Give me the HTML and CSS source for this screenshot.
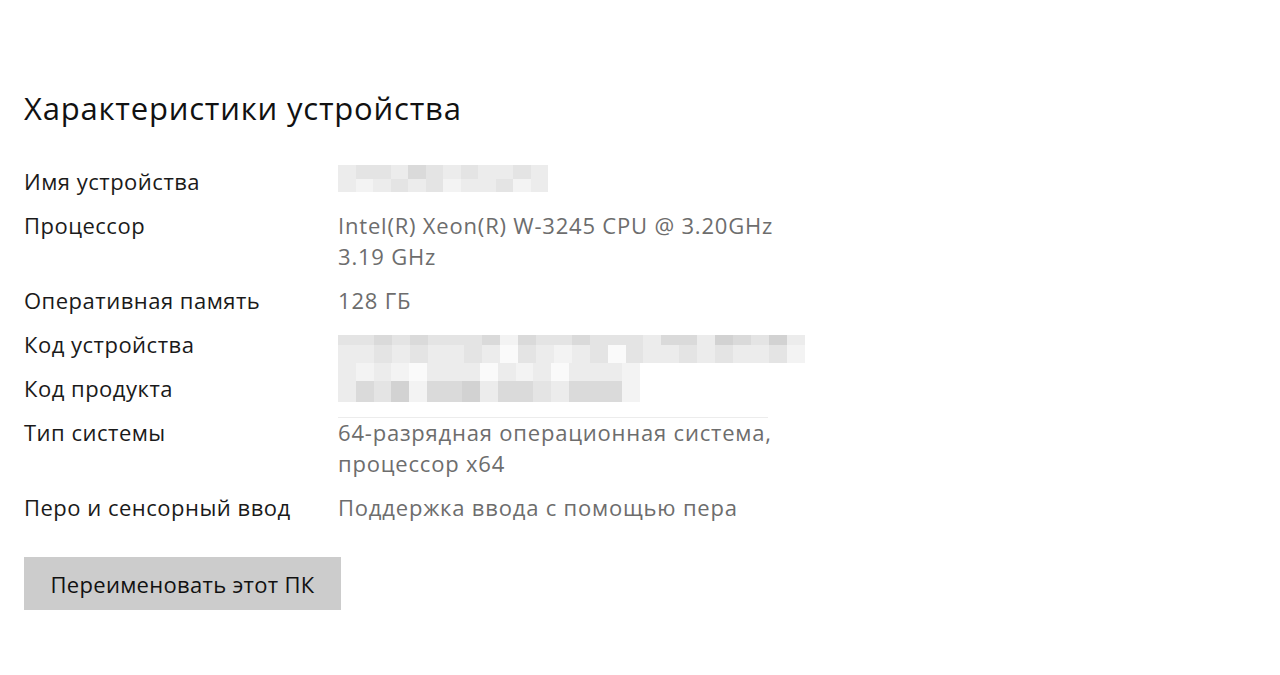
FILE: index.html
```html
<!DOCTYPE html>
<html lang="ru">
<head>
<meta charset="UTF-8" />
<meta name="viewport" content="width=device-width, initial-scale=1" />
<title>Характеристики устройства</title>
<link rel="stylesheet" href="styles.css">
</head>
<body>

<section class="specs">
  <h1 class="specs-title">Характеристики устройства</h1>

  <dl class="specs-list">
    <dt>Имя устройства</dt>
    <dd>
      <!-- скрыто (пикселизация) -->
      <div class="masked masked-name">
        <div class="px-row"><i class="a"></i><i class="b"></i><i class="b"></i><i class="a"></i><i class="c"></i><i class="b"></i><i class="a"></i><i class="b"></i><i class="a"></i><i class="a"></i><i class="b"></i><i class="a"></i></div>
        <div class="px-row"><i class="a"></i><i class="e"></i><i class="a"></i><i class="b"></i><i class="a"></i><i class="b"></i><i class="e"></i><i class="a"></i><i class="a"></i><i class="b"></i><i class="e"></i><i class="a"></i></div>
      </div>
    </dd>

    <dt>Процессор</dt>
    <dd>Intel(R) Xeon(R) W-3245 CPU @ 3.20GHz<br>3.19 GHz</dd>

    <dt>Оперативная память</dt>
    <dd>128 ГБ</dd>

    <dt>Код устройства</dt>
    <dd class="fixed">
      <!-- закрывает код устройства и код продукта -->
      <div class="masked masked-code">
        <div class="px-row thin"><i class="b"></i><i class="b"></i><i class="c"></i><i class="b"></i><i class="c"></i><i class="b"></i><i class="b"></i><i class="b"></i><i class="c"></i><i class="e"></i><i class="c"></i><i class="b"></i><i class="b"></i><i class="c"></i><i class="b"></i><i class="b"></i><i class="b"></i><i class="a"></i><i class="c"></i><i class="c"></i><i class="a"></i><i class="d"></i><i class="c"></i><i class="b"></i><i class="d"></i><i class="a"></i></div>
        <div class="px-row"><i class="a"></i><i class="a"></i><i class="b"></i><i class="a"></i><i class="b"></i><i class="a"></i><i class="a"></i><i class="b"></i><i class="a"></i><i class="f"></i><i class="b"></i><i class="a"></i><i class="e"></i><i class="a"></i><i class="b"></i><i class="f"></i><i class="b"></i><i class="a"></i><i class="a"></i><i class="b"></i><i class="a"></i><i class="b"></i><i class="a"></i><i class="a"></i><i class="b"></i><i class="e"></i></div>
        <div class="px-row short"><i class="a"></i><i class="e"></i><i class="a"></i><i class="e"></i><i class="f"></i><i class="a"></i><i class="a"></i><i class="a"></i><i class="f"></i><i class="a"></i><i class="e"></i><i class="a"></i><i class="f"></i><i class="a"></i><i class="a"></i><i class="a"></i><i class="e"></i></div>
        <div class="px-row short tall"><i class="a"></i><i class="c"></i><i class="b"></i><i class="d"></i><i class="e"></i><i class="c"></i><i class="c"></i><i class="d"></i><i class="a"></i><i class="c"></i><i class="c"></i><i class="b"></i><i class="a"></i><i class="c"></i><i class="c"></i><i class="c"></i><i class="e"></i></div>
      </div>
    </dd>

    <dt>Код продукта</dt>
    <dd></dd>

    <dt>Тип системы</dt>
    <dd class="faint-line">64-разрядная операционная система,<br>процессор x64</dd>

    <dt>Перо и сенсорный ввод</dt>
    <dd>Поддержка ввода с помощью пера</dd>
  </dl>

  <button class="btn-rename" type="button">Переименовать этот ПК</button>
</section>

</body>
</html>
```

FILE: styles.css
```css
body {
  margin: 0;
  background: #fff;
  font-family: "Open Sans", "Noto Sans", Arial, sans-serif;
  color: #1a1a1a;
}

.specs {
  padding: 88px 24px 0 24px;
}

.specs-title {
  margin: 0 0 38px 0;
  font-size: 31px;
  font-weight: 400;
  line-height: 40px;
  letter-spacing: 0.8px;
  color: #111;
}

.specs-list {
  display: grid;
  grid-template-columns: 314px 1fr;
  row-gap: 13px;
  margin: 0;
  font-size: 22px;
  line-height: 31px;
}
.specs-list dt { margin: 0; color: #1a1a1a; letter-spacing: 0.5px; }
.specs-list dd {
  margin: 0;
  color: #6d6d6d;
  min-height: 31px;
  letter-spacing: 0.8px;
  white-space: nowrap;
}
.specs-list dd.fixed { height: 31px; }

/* остаток пикселизации над "Тип системы" */
.faint-line {
  background: linear-gradient(#ececec, #ececec) no-repeat 0 0 / 430px 1px;
}

/* пикселизованные поля */
.masked { display: flex; flex-direction: column; }
.masked-name { width: 210px; margin-top: -1px; }
.masked-code { width: 467px; margin-top: 6px; }
.px-row { display: flex; }
.masked-name .px-row { height: 13.5px; }
.masked-code .px-row { height: 18px; }
.masked-code .px-row.thin { height: 10px; }
.masked-code .px-row.tall { height: 21px; }
.masked-code .px-row.short { width: 302px; }
.px-row i { flex: 1; }
.px-row .a { background: #ececec; }
.px-row .b { background: #e4e4e4; }
.px-row .c { background: #dadada; }
.px-row .d { background: #d2d2d2; }
.px-row .e { background: #f3f3f3; }
.px-row .f { background: #fafafa; }

.btn-rename {
  margin-top: 34px;
  width: 317px;
  height: 53px;
  border: none;
  background: #cccccc;
  color: #111;
  font-family: inherit;
  font-size: 22px;
  letter-spacing: 0.3px;
  padding: 0;
  cursor: pointer;
}
```
